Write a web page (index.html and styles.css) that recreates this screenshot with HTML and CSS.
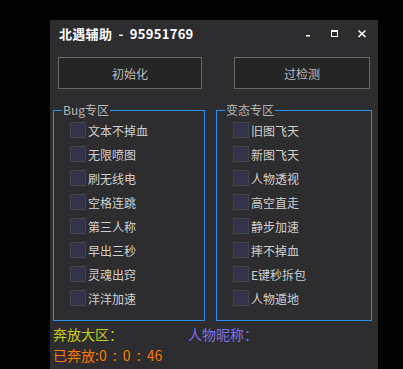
FILE: index.html
```html
<!DOCTYPE html>
<html lang="zh-CN">
<head>
<meta charset="UTF-8">
<title>北遇辅助</title>
<link rel="stylesheet" href="styles.css">
</head>
<body>
<div class="win">
	<div class="titlebar">
		<span class="title">北遇辅助 - 95951769</span>
		<div class="ctrls">
			<span class="ctrl"><svg width="27" height="28" viewBox="0 0 27 28"><rect x="12" y="15" width="4" height="1.5" fill="#fff"/></svg></span>
			<span class="ctrl"><svg width="27" height="28" viewBox="0 0 27 28"><rect x="10.5" y="10.5" width="6" height="6" fill="none" stroke="#fff" stroke-width="1"/><rect x="10" y="10" width="7" height="2" fill="#fff"/></svg></span>
			<span class="ctrl"><svg width="27" height="28" viewBox="0 0 27 28"><path d="M10.5 10.5 L17.5 17 M17.5 10.5 L10.5 17" stroke="#fff" stroke-width="1.6" fill="none"/></svg></span>
		</div>
	</div>

	<div class="btns">
		<button class="btn btn-init">初始化</button>
		<button class="btn btn-pass">过检测</button>
	</div>

	<div class="groups">
		<fieldset class="group group-bug">
			<legend>Bug专区</legend>
			<label class="chk"><input type="checkbox" class="cb">文本不掉血</label>
			<label class="chk"><input type="checkbox" class="cb">无限喷图</label>
			<label class="chk"><input type="checkbox" class="cb">刷无线电</label>
			<label class="chk"><input type="checkbox" class="cb">空格连跳</label>
			<label class="chk"><input type="checkbox" class="cb">第三人称</label>
			<label class="chk"><input type="checkbox" class="cb">早出三秒</label>
			<label class="chk"><input type="checkbox" class="cb">灵魂出窍</label>
			<label class="chk"><input type="checkbox" class="cb">洋洋加速</label>
		</fieldset>
		<fieldset class="group group-bt">
			<legend>变态专区</legend>
			<label class="chk"><input type="checkbox" class="cb">旧图飞天</label>
			<label class="chk"><input type="checkbox" class="cb">新图飞天</label>
			<label class="chk"><input type="checkbox" class="cb">人物透视</label>
			<label class="chk"><input type="checkbox" class="cb">高空直走</label>
			<label class="chk"><input type="checkbox" class="cb">静步加速</label>
			<label class="chk"><input type="checkbox" class="cb">摔不掉血</label>
			<label class="chk"><input type="checkbox" class="cb">E键秒拆包</label>
			<label class="chk"><input type="checkbox" class="cb">人物遁地</label>
		</fieldset>
	</div>

	<div class="info">
		<span class="area">奔放大区：</span>
		<span class="nick">人物昵称：</span>
	</div>
	<div class="timer">已奔放:0 : 0 : 46</div>
</div>
</body>
</html>
```

FILE: styles.css
```css
html,body { margin:0; padding:0; }
body { background:#000; width:403px; height:369px; overflow:hidden; font-family:"Noto Sans CJK SC", "Noto Sans", sans-serif; }

.win { margin:20px 0 0 50px; width:328px; height:349px; background:#2d2d30; }

.titlebar { height:28px; display:flex; align-items:center; padding:0 3px 0 9px; }
.title { color:#fff; font-weight:bold; font-size:13px; line-height:16px; word-spacing:3px; letter-spacing:0.3px; }
.ctrls { margin-left:auto; display:flex; }
.ctrl { display:block; width:27px; height:28px; }
.ctrl svg { display:block; }

.btns { display:flex; justify-content:space-between; padding:0 8px; margin-top:9px; }
.btn { height:32px; margin:0; padding:0; background:#252526; border:1px solid #686868; color:#bababa; font-family:inherit; font-size:12px; }
.btn-init { width:144px; }
.btn-pass { width:136px; }

.groups { display:flex; gap:11px; padding-left:3px; margin-top:14px; }
.group { box-sizing:border-box; margin:0; padding:1px 0 10px 8px; border:1px solid #2a8ef0; min-inline-size:0; }
.group-bug { width:152px; }
.group-bt { width:156px; }
.group legend { padding:0 1px; font-size:12px; line-height:14px; color:#b8b4b0; }

.chk { display:flex; align-items:center; height:24px; margin-left:8px; font-size:12px; color:#cfcfcf; }
.cb { appearance:none; -webkit-appearance:none; box-sizing:border-box; width:16px; height:16px; margin:0 2px 0 0; background:#33334a; border:1px solid #43434c; }

.info { display:flex; margin-top:3px; padding-left:3px; font-size:14px; line-height:21px; }
.area { width:135px; color:#c8cc22; }
.nick { color:#7a70ee; }
.timer { padding-left:3px; font-size:14px; line-height:21px; color:#ff7a00; word-spacing:3px; }
```
